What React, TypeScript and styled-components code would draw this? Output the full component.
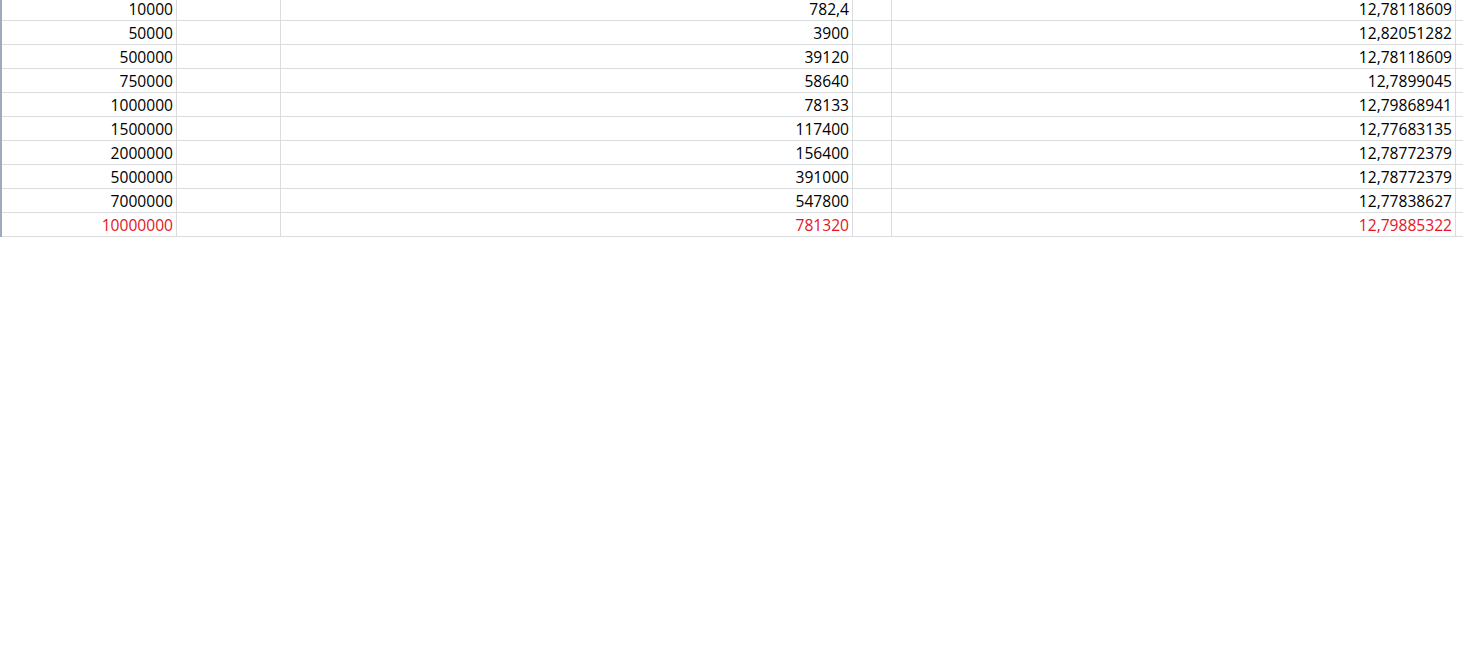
import React from "react";
import styled, { createGlobalStyle } from "styled-components";

const GlobalStyle = createGlobalStyle`
  html, body {
    margin: 0;
    padding: 0;
    background: #ffffff;
  }
  body {
    font-family: "Open Sans", "Liberation Sans", Arial, sans-serif;
  }
`;

const Sheet = styled.div`
  display: grid;
  grid-template-columns: 175px 104px 572px 39px 564px 1fr;
  margin-top: -3px;
  border-left: 2px solid #a3a9bd;
  width: calc(100% - 2px);
`;

const Cell = styled.div<{ $red?: boolean; $last?: boolean }>`
  box-sizing: border-box;
  height: 24px;
  border-bottom: 1px solid #dadcdd;
  border-right: ${(p) => (p.$last ? "none" : "1px solid #dadcdd")};
  display: flex;
  align-items: center;
  justify-content: flex-end;
  padding-right: 3px;
  padding-top: 1px;
  font-size: 15.6px;
  color: ${(p) => (p.$red ? "#e4161c" : "#000000")};
  white-space: nowrap;
  overflow: hidden;
`;

const rows: [string, string, string][] = [
  ["10000", "782,4", "12,78118609"],
  ["50000", "3900", "12,82051282"],
  ["500000", "39120", "12,78118609"],
  ["750000", "58640", "12,7899045"],
  ["1000000", "78133", "12,79868941"],
  ["1500000", "117400", "12,77683135"],
  ["2000000", "156400", "12,78772379"],
  ["5000000", "391000", "12,78772379"],
  ["7000000", "547800", "12,77838627"],
  ["10000000", "781320", "12,79885322"],
];

export default function App() {
  return (
    <>
      <GlobalStyle />
      <Sheet>
        {rows.map((r, i) => {
          const red = i === rows.length - 1;
          return (
            <React.Fragment key={i}>
              <Cell $red={red}>{r[0]}</Cell>
              <Cell />
              <Cell $red={red}>{r[1]}</Cell>
              <Cell />
              <Cell $red={red}>{r[2]}</Cell>
              <Cell $last />
            </React.Fragment>
          );
        })}
      </Sheet>
    </>
  );
}
